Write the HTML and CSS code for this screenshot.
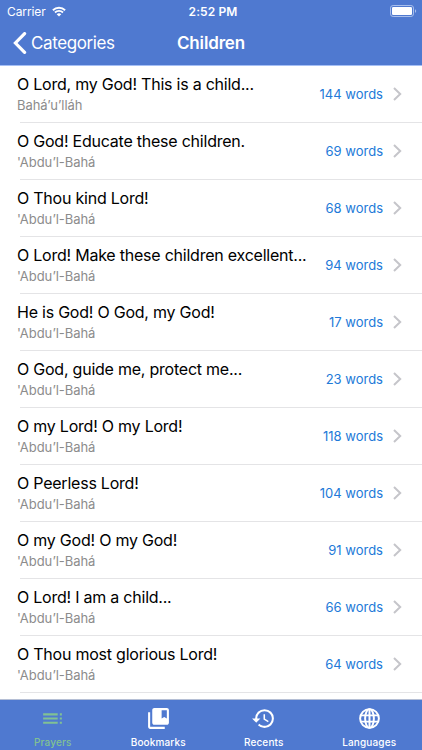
FILE: index.html
```html
<!DOCTYPE html>
<html lang="en">
  <head>
    <meta charset="UTF-8" />
    <meta name="viewport" content="width=device-width, initial-scale=1.0" />
    <title>Children</title>
    <link rel="stylesheet" href="styles.css">
  </head>
  <body>
    <div class="app">
      <header class="header">
        <div class="status-bar">
          <div class="carrier">
            <span>Carrier</span>
            <svg class="wifi" viewBox="0 0 14 11" width="14" height="11">
              <path d="M.9 4.2a8.8 8.8 0 0 1 12.2 0M3 6.5a5.8 5.8 0 0 1 8 0" fill="none" stroke="#fff" stroke-width="1.9" />
              <path d="M4.700 8.300a3.400 3.400 0 0 1 4.600 0L7 10.600z" fill="#fff" />
            </svg>
          </div>
          <span class="time">2:52 PM</span>
          <svg class="battery" viewBox="0 0 27 12" width="27" height="12">
            <rect x=".5" y=".5" width="23" height="11" rx="2.6" fill="none" stroke="#a9bfec" />
            <rect x="2" y="2" width="20" height="8" rx="1.2" fill="#fff" />
            <path d="M25 4.200c1.600.500 1.600 3.100 0 3.600z" fill="#a9bfec" />
          </svg>
        </div>
        <div class="nav-bar">
          <a class="back" href="#">
            <svg viewBox="0 0 14 22" width="14" height="22">
              <path d="M11.600 1.600 2.400 11l9.200 9.400" fill="none" stroke="#fff" stroke-width="3.200" stroke-linecap="round" />
            </svg>
            <span>Categories</span>
          </a>
          <h1>Children</h1>
        </div>
      </header>

      <ul class="prayer-list" id="prayerList"></ul>

      <nav class="tab-bar">
        <a class="tab active" href="#">
          <svg viewBox="0 0 24 24" width="25" height="25">
            <path d="M3 9h14V7H3v2zm0 4h14v-2H3v2zm0 4h14v-2H3v2zm16 0h2v-2h-2v2zm0-10v2h2V7h-2zm0 6h2v-2h-2v2z" />
          </svg>
          <span>Prayers</span>
        </a>
        <a class="tab" href="#">
          <svg viewBox="0 0 24 24" width="25" height="25">
            <path d="M4 6H2v14c0 1.100.900 2 2 2h14v-2H4V6zm16-4H8c-1.100 0-2 .900-2 2v12c0 1.100.900 2 2 2h12c1.100 0 2-.900 2-2V4c0-1.100-.900-2-2-2zm0 10-2.500-1.500L15 12V4h5v8z" />
          </svg>
          <span>Bookmarks</span>
        </a>
        <a class="tab" href="#">
          <svg viewBox="0 0 24 24" width="25" height="25">
            <path d="M13 3a9 9 0 0 0-9 9H1l3.890 3.890.070.140L9 12H6c0-3.870 3.130-7 7-7s7 3.130 7 7-3.130 7-7 7c-1.930 0-3.680-.790-4.940-2.060l-1.420 1.420A8.950 8.950 0 0 0 13 21a9 9 0 0 0 0-18zm-1 5v5l4.280 2.540.720-1.210-3.500-2.080V8H12z" />
          </svg>
          <span>Recents</span>
        </a>
        <a class="tab" href="#">
          <svg class="globe" viewBox="0 0 24 24" width="25" height="25">
            <circle cx="12" cy="12" r="9" />
            <ellipse cx="12" cy="12" rx="4.200" ry="9" />
            <path d="M3.600 9h16.800M3.600 15h16.800M12 3v18" />
          </svg>
          <span>Languages</span>
        </a>
      </nav>
    </div>

    <script>
      const prayers = [
        { title: "O Lord, my God! This is a child...", author: "Bahá’u’lláh", words: 144 },
        { title: "O God! Educate these children.", author: "'Abdu’l-Bahá", words: 69 },
        { title: "O Thou kind Lord!", author: "'Abdu’l-Bahá", words: 68 },
        { title: "O Lord! Make these children excellent...", author: "'Abdu’l-Bahá", words: 94 },
        { title: "He is God! O God, my God!", author: "'Abdu’l-Bahá", words: 17 },
        { title: "O God, guide me, protect me...", author: "'Abdu’l-Bahá", words: 23 },
        { title: "O my Lord! O my Lord!", author: "'Abdu’l-Bahá", words: 118 },
        { title: "O Peerless Lord!", author: "'Abdu’l-Bahá", words: 104 },
        { title: "O my God! O my God!", author: "'Abdu’l-Bahá", words: 91 },
        { title: "O Lord! I am a child...", author: "'Abdu’l-Bahá", words: 66 },
        { title: "O Thou most glorious Lord!", author: "'Abdu’l-Bahá", words: 64 },
      ];

      document.getElementById("prayerList").innerHTML = prayers
        .map(
          (prayer) => `
            <li class="prayer">
              <div class="prayer-text">
                <div class="prayer-title">${prayer.title}</div>
                <div class="prayer-author">${prayer.author}</div>
              </div>
              <span class="word-count">${prayer.words} words</span>
              <svg class="chevron" viewBox="0 0 9 14" width="9" height="14">
                <path d="M1 1l6.200 6L1 13" />
              </svg>
            </li>`
        )
        .join("");
    </script>
  </body>
</html>
```

FILE: styles.css
```css
* {
  box-sizing: border-box;
}
body {
  margin: 0;
  font-family: Inter, "Liberation Sans", sans-serif;
  background-color: #fff;
  color: #000;
}
a {
  color: inherit;
  text-decoration: none;
}
svg {
  display: block;
  flex-shrink: 0;
}
.app {
  display: flex;
  flex-direction: column;
  height: 750px;
  overflow: hidden;
}

/* Header */
.header {
  height: 66px;
  background-color: #4f79d0;
  border-bottom: 1px solid #a5bff5;
  color: #fff;
}
.status-bar {
  display: grid;
  grid-template-columns: 1fr auto 1fr;
  align-items: center;
  height: 22px;
  padding: 0 5px 0 7px;
  font-size: 12px;
}
.carrier {
  display: flex;
  align-items: center;
  gap: 6px;
  letter-spacing: -0.1px;
}
.time {
  padding-left: 2px;
  font-weight: 600;
  letter-spacing: 0.1px;
}
.battery {
  justify-self: end;
}
.nav-bar {
  display: grid;
  grid-template-columns: 1fr auto 1fr;
  align-items: center;
  height: 42px;
  padding: 0 13px;
}
.back {
  display: flex;
  align-items: center;
  gap: 4px;
  font-size: 17px;
  letter-spacing: -0.4px;
}
.nav-bar h1 {
  margin: 0;
  font-size: 17px;
  font-weight: 600;
  letter-spacing: -0.15px;
}

/* Prayer list */
.prayer-list {
  flex: 1;
  margin: 0;
  padding: 0;
  list-style: none;
}
.prayer {
  display: flex;
  align-items: center;
  height: 57px;
  padding: 0 20px 2px 17px;
  background: linear-gradient(#e4e4e6, #e4e4e6) 20px 100% / 100% 1px no-repeat;
}
.prayer-text {
  flex: 1;
  white-space: nowrap;
}
.prayer-title {
  font-size: 16px;
  line-height: 22px;
  letter-spacing: -0.23px;
}
.prayer-author {
  font-size: 13px;
  line-height: 20px;
  letter-spacing: -0.05px;
  color: #8c8c8c;
}
.word-count {
  font-size: 13px;
  color: #2279d8;
}
.chevron {
  margin-left: 10px;
}
.chevron path {
  fill: none;
  stroke: #c5c5ca;
  stroke-width: 2;
}

/* Tab bar */
.tab-bar {
  display: grid;
  grid-template-columns: repeat(4, 1fr);
  height: 51px;
  background-color: #4f79d0;
  border-top: 1px solid #b5bfd5;
  color: #fff;
}
.tab {
  display: flex;
  flex-direction: column;
  align-items: center;
  padding-top: 6px;
  font-size: 10px;
  font-weight: 500;
  line-height: 12px;
  letter-spacing: 0.15px;
}
.tab span {
  margin-top: 5px;
}
.tab svg {
  fill: currentColor;
}
.tab .globe {
  fill: none;
  stroke: currentColor;
  stroke-width: 1.9;
}
.tab.active {
  color: #81c193;
}
```
